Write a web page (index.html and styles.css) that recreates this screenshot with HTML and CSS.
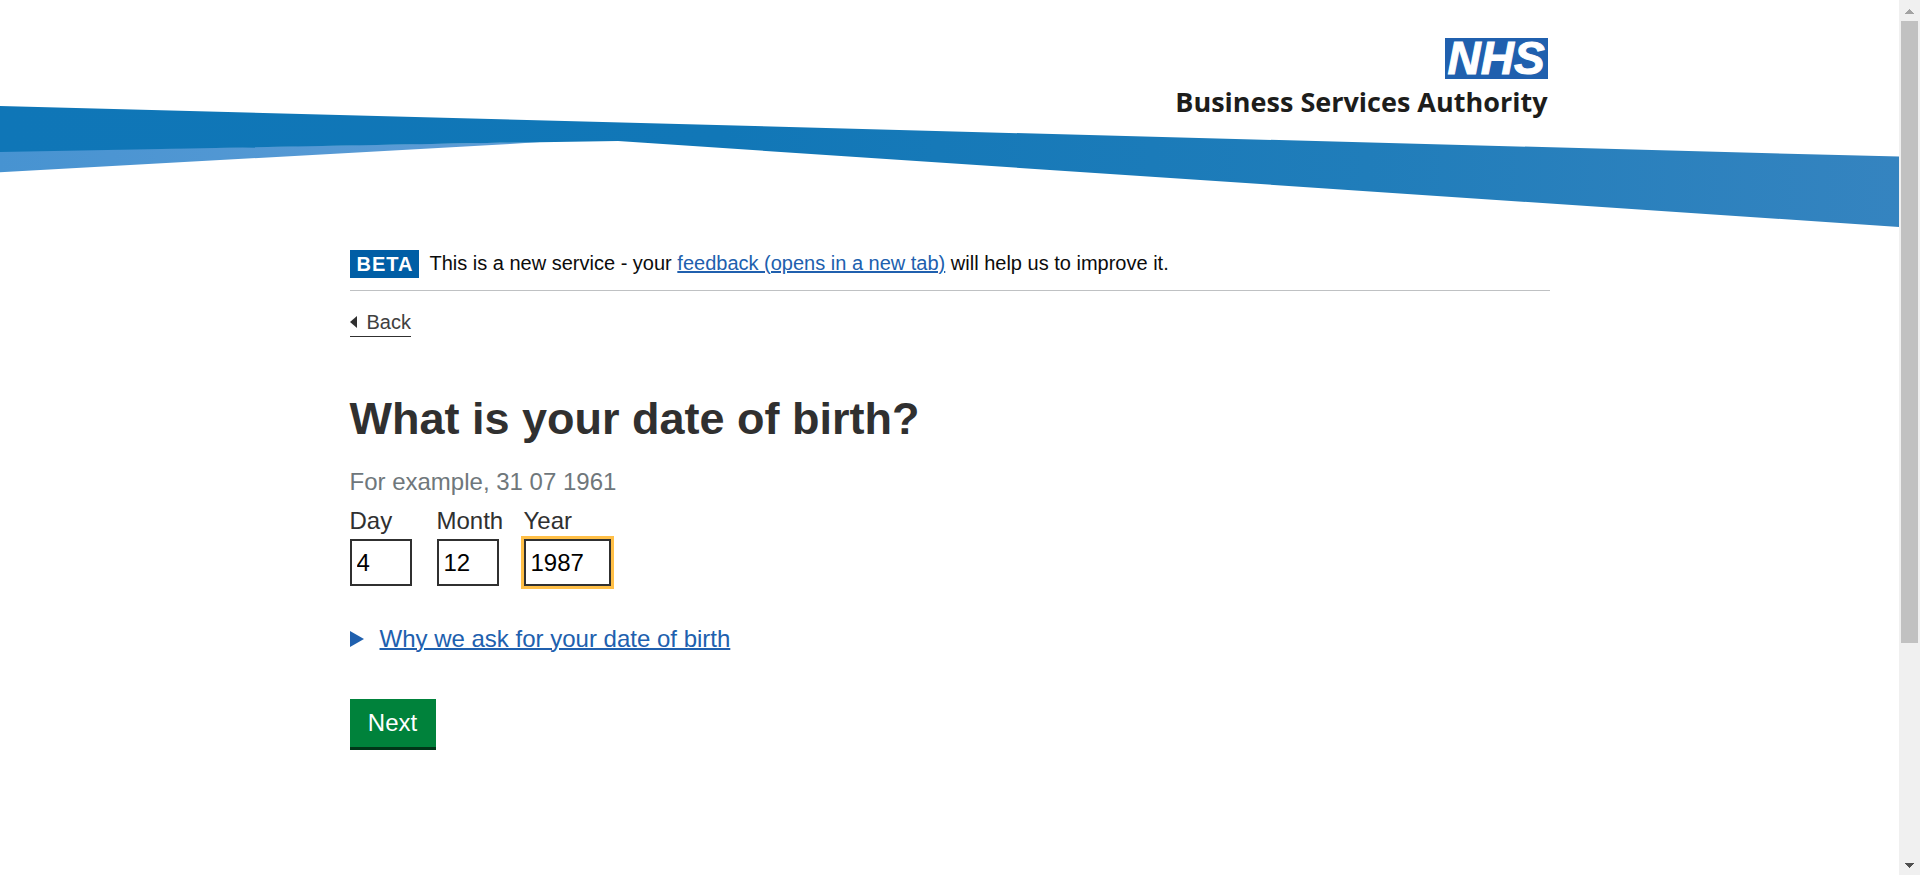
FILE: index.html
```html
<!DOCTYPE html>
<html lang="en">
<head>
<meta charset="utf-8">
<title>What is your date of birth?</title>
<link rel="stylesheet" href="styles.css">
</head>
<body>
<div class="page">
  <header class="header">
    <svg class="swoosh" viewBox="0 0 1899 240" preserveAspectRatio="none" aria-hidden="true">
      <defs>
        <linearGradient id="band" x1="0" x2="1" y1="0" y2="0">
          <stop offset="0" stop-color="#0f76b7"/>
          <stop offset="0.38" stop-color="#1177b7"/>
          <stop offset="0.72" stop-color="#207dba"/>
          <stop offset="1" stop-color="#3584c0"/>
        </linearGradient>
        <linearGradient id="under" x1="0" x2="1" y1="0" y2="0">
          <stop offset="0" stop-color="#4793d1"/>
          <stop offset="1" stop-color="#5f9dd6"/>
        </linearGradient>
      </defs>
      <path fill="url(#under)" d="M0 151L540 142L510 144L0 172.300Z"/>
      <path fill="url(#band)" d="M0 106L1899 156.600V226.900L618 141L500 142.800L0 152Z"/>
    </svg>
    <div class="container brand">
      <span class="nhs">NHS</span>
      <span class="authority">Business Services Authority</span>
    </div>
  </header>
  <main class="container">
    <div class="phase">
      <strong class="tag">BETA</strong>
      <span>This is a new service - your <a class="link" href="#feedback">feedback (opens in a new tab)</a> will help us to improve it.</span>
    </div>
    <a class="back" href="#back"><svg class="back-arrow" viewBox="0 0 7 12" aria-hidden="true"><path d="M7 0V12L0 6Z" fill="#303030"/></svg>Back</a>
    <form class="form" action="#">
      <h1 class="title">What is your date of birth?</h1>
      <p class="hint" id="hint">For example, 31 07 1961</p>
      <div class="date" role="group" aria-describedby="hint">
        <div class="field">
          <label for="day">Day</label>
          <input id="day" class="box" type="text" value="4">
        </div>
        <div class="field">
          <label for="month">Month</label>
          <input id="month" class="box" type="text" value="12">
        </div>
        <div class="field">
          <label for="year">Year</label>
          <input id="year" class="box box-year" type="text" value="1987">
        </div>
      </div>
      <details class="details">
        <summary class="summary"><svg class="marker" viewBox="0 0 14 16" aria-hidden="true"><path d="M0 0L14 8L0 16Z" fill="#2060ae"/></svg><span class="link">Why we ask for your date of birth</span></summary>
      </details>
      <button class="next" type="submit">Next</button>
    </form>
  </main>
</div>
<div class="scrollbar" aria-hidden="true">
  <svg class="arrow" viewBox="0 0 9 5"><path d="M0 5V4H1V3H2V2H3V1H4V0H5V1H6V2H7V3H8V4H9V5Z" fill="#a3a3a3"/></svg>
  <div class="track"><div class="thumb"></div></div>
  <svg class="arrow" viewBox="0 0 9 5"><path d="M0 0V1H1V2H2V3H3V4H4V5H5V4H6V3H7V2H8V1H9V0Z" fill="#505050"/></svg>
</div>
</body>
</html>
```
FILE: styles.css
```css
* { box-sizing: border-box; }
body {
  margin: 0;
  display: flex;
  min-height: 100vh;
  background: #fff;
  color: #0b0c0c;
  font-family: "Liberation Sans", Arial, sans-serif;
  font-size: 24px;
}
.page { flex: 1; min-width: 0; }
.container { width: 100%; max-width: 1200px; margin: 0 auto; }
.header { position: relative; height: 240px; }
.swoosh { position: absolute; inset: 0; width: 100%; height: 100%; }
.brand {
  position: relative;
  display: flex;
  flex-direction: column;
  align-items: flex-end;
  padding: 38px 2px 0 0;
}
.nhs {
  display: flex;
  align-items: center;
  justify-content: center;
  width: 103px;
  height: 41px;
  background: #2060ae;
  color: #fff;
  font-size: 46px;
  font-weight: 700;
  font-style: italic;
  line-height: 41px;
  -webkit-text-stroke: 1px #fff;
}
.authority {
  margin-top: 3px;
  color: #1d1d1b;
  font-family: "Open Sans", "Noto Sans", sans-serif;
  font-size: 27px;
  font-weight: 700;
  line-height: 40px;
}
.phase {
  display: flex;
  align-items: flex-start;
  gap: 10px;
  padding: 10px 0 12px;
  border-bottom: 1px solid #bfc1c3;
  font-size: 20px;
  line-height: 26px;
}
.tag {
  padding: 0 6px 0 7px;
  background: #005ea5;
  color: #fff;
  font-size: 20px;
  letter-spacing: 1px;
  line-height: 28px;
}
.link {
  color: #2060ae;
  text-decoration: underline;
  text-decoration-thickness: 2px;
}
.back {
  display: inline-flex;
  align-items: center;
  gap: 10px;
  margin-top: 19px;
  padding-bottom: 2px;
  border-bottom: 1px solid #303030;
  color: #404040;
  font-size: 20px;
  line-height: 24px;
  text-decoration: none;
}
.back-arrow { width: 7px; height: 12px; }
.form { color: #303030; }
.title {
  margin: 56px 0 0;
  font-size: 45px;
  line-height: 52px;
}
.hint { margin: 22px 0 0; color: #6f777b; line-height: 30px; }
.date { display: flex; gap: 25px; margin-top: 8px; }
.field { display: flex; flex-direction: column; gap: 2px; width: 62px; }
.field label { line-height: 32px; }
.box {
  height: 47px;
  width: 62px;
  padding: 0 5px;
  border: 2px solid #303030;
  background: #fff;
  color: #000;
  font: inherit;
}
.box-year { width: 87px; outline: 3px solid #ffbf47; }
.details { margin-top: 38px; }
.summary {
  display: inline-flex;
  align-items: center;
  gap: 16px;
  line-height: 30px;
  list-style: none;
  cursor: pointer;
}
.marker { width: 14px; height: 16px; }
.next {
  display: block;
  min-width: 86px;
  margin-top: 45px;
  padding: 0 18px;
  border: 0;
  background: #00823b;
  box-shadow: 0 3px 0 #003618;
  color: #fff;
  font: inherit;
  line-height: 48px;
}
.scrollbar {
  display: flex;
  flex-direction: column;
  align-items: center;
  width: 21px;
  background: #f0f0f0;
}
.arrow { width: 9px; height: 5px; margin: 9px 0 7px; }
.track { flex: 1; width: 17px; }
.thumb { height: 74.7%; background: #c1c1c1; }
```
